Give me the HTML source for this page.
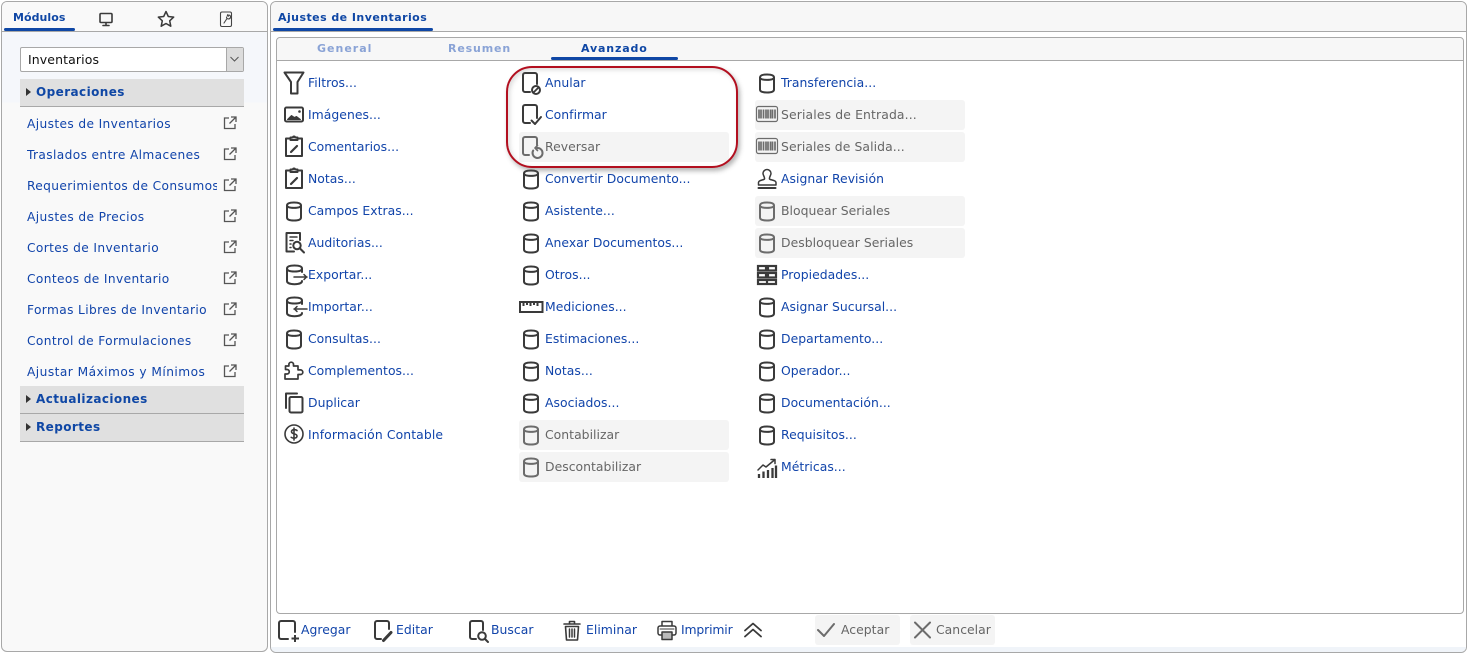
<!DOCTYPE html>
<html lang="es"><head><meta charset="utf-8"><title>Ajustes de Inventarios</title>
<style>
html,body{margin:0;padding:0;width:1469px;height:653px;overflow:hidden;background:#fff;font-family:"DejaVu Sans","Liberation Sans",sans-serif;}
*{box-sizing:border-box}
.a{position:absolute}
#L{left:1px;top:1px;width:267px;height:651px;border:1px solid #a8a8a8;border-radius:6px;background:linear-gradient(#f5f7fb 0,#f5f7fb 100px,#f9f9f9 101px);overflow:hidden}
#R{left:270px;top:1px;width:1197px;height:652px;border:1px solid #a8a8a8;border-radius:6px;background:#fff;overflow:hidden}
.tb{position:absolute;left:0;right:0;top:0;height:30px;background:#f7f7f7;border-bottom:1px solid #a8a8a8}
#body{left:276px;top:37px;width:1188px;height:577px;border:1px solid #a8a8a8;border-radius:4px;background:#fff}
#sub{position:absolute;left:0;right:0;top:0;height:23px;background:#f7f7f7;border-bottom:1px solid #a8a8a8;border-radius:4px 4px 0 0}
.ul{position:absolute;background:#0f47a5;height:3px;border-radius:2px}
.t{position:absolute;white-space:nowrap;font-size:12.4px;line-height:16px;color:#1144aa;margin-top:1px;letter-spacing:.03px}
.d{color:#666}
.b{position:absolute;font-weight:bold;white-space:nowrap;color:#0f47a5}
.g{position:absolute;width:210px;height:30px;background:#f4f4f4;border-radius:3px}
.ic{position:absolute;width:24px;height:24px;fill:none;stroke:#3a3a3a;stroke-width:2;stroke-linecap:round;stroke-linejoin:round;overflow:visible}
.dis{stroke:#6c6c6c}
.sec{position:absolute;left:20px;width:224px;height:28px;background:#e0e0e0;border-bottom:1px solid #a8a8a8}
.sec i{position:absolute;left:6px;top:9px;width:0;height:0;border-left:5px solid #333;border-top:4px solid transparent;border-bottom:4px solid transparent}
.sec span{position:absolute;left:16px;top:5px;font-size:12px;line-height:16px;font-weight:bold;letter-spacing:.42px;color:#0f47a5;white-space:nowrap}
.m{position:absolute;left:27px;margin-top:1px;font-size:12.2px;line-height:16px;color:#1144aa;white-space:nowrap;width:190px;overflow:hidden;letter-spacing:.38px}
.ext{position:absolute;left:222px;width:16px;height:16px;fill:none;stroke:#555;stroke-width:1.300}
</style></head><body>
<svg width="0" height="0" style="position:absolute">
<defs>
<symbol id="cyl" viewBox="0 0 24 24" overflow="visible"><path d="M5 7.500c0-2 2.800-3 7-3s7 1 7 3v12c0 2-2.800 3-7 3s-7-1-7-3z"/><path d="M5 7.500c0 1.600 2.800 2.400 7 2.400s7-.8 7-2.400"/></symbol>
<symbol id="ext" viewBox="0 0 16 16"><path d="M7 3H2.500v10.500H13V9"/><path d="M9 2h5v5M14 2L7.500 8.500"/></symbol>
</defs></svg>

<div id="L" class="a"><div class="tb" style="height:30px;background:#f9f9f9"></div></div>
<div id="R" class="a"><div class="tb"></div><div class="a" style="left:0;right:0;bottom:0;height:5px;background:#f0f4f9"></div></div>

<!-- left tabs -->
<div class="b" style="left:13px;top:11px;font-size:11px;line-height:14px;letter-spacing:.05px">Módulos</div>
<div class="ul" style="left:4px;top:28px;width:71px"></div>
<svg class="ic" style="left:94px;top:7px;stroke-width:1.600"><rect x="6" y="6.500" width="12" height="9" rx="1" fill="#f7f7f7"/><path d="M9 18.500h6M12 16v2"/></svg>
<svg class="ic" style="left:154px;top:7px;stroke-width:1.500"><path d="M12 4.500l2.300 5 5.400.6-4 3.700 1.100 5.400-4.800-2.700-4.800 2.700 1.100-5.400-4-3.700 5.400-.6z"/></svg>
<svg class="ic" style="left:214px;top:7px;stroke-width:1.100;stroke:#444"><rect x="6.500" y="5" width="11" height="14.500" rx="1.500"/><path d="M10 16l3-4.500M12.500 10a2 2 0 1 0 2.500-2l-.7 1.300-1-.5.500-1.200"/></svg>

<!-- select -->
<div class="a" style="left:20px;top:47px;width:224px;height:25px;background:#fff;border:1px solid #a8a8a8;border-radius:2px;font-size:12.5px;line-height:23px;padding-left:7px;color:#111;letter-spacing:.1px">Inventarios</div>
<div class="a" style="left:226px;top:48px;width:17px;height:23px;background:#dcdcdc;border-left:1px solid #a8a8a8"></div>
<svg class="a" style="left:229px;top:55px" width="11" height="8" fill="none" stroke="#555" stroke-width="1"><path d="M1.500 2l4 4 4-4"/></svg>

<!-- sections -->
<div class="sec" style="top:79px"><i></i><span>Operaciones</span></div>
<div class="m" style="top:115px">Ajustes de Inventarios</div>
<div class="m" style="top:146px">Traslados entre Almacenes</div>
<div class="m" style="top:177px">Requerimientos de Consumos</div>
<div class="m" style="top:208px">Ajustes de Precios</div>
<div class="m" style="top:239px">Cortes de Inventario</div>
<div class="m" style="top:270px">Conteos de Inventario</div>
<div class="m" style="top:301px">Formas Libres de Inventario</div>
<div class="m" style="top:332px">Control de Formulaciones</div>
<div class="m" style="top:363px;letter-spacing:.46px">Ajustar Máximos y Mínimos</div>
<svg class="ext" style="top:115px"><use href="#ext"/></svg>
<svg class="ext" style="top:146px"><use href="#ext"/></svg>
<svg class="ext" style="top:177px"><use href="#ext"/></svg>
<svg class="ext" style="top:208px"><use href="#ext"/></svg>
<svg class="ext" style="top:239px"><use href="#ext"/></svg>
<svg class="ext" style="top:270px"><use href="#ext"/></svg>
<svg class="ext" style="top:301px"><use href="#ext"/></svg>
<svg class="ext" style="top:332px"><use href="#ext"/></svg>
<svg class="ext" style="top:363px"><use href="#ext"/></svg>
<div class="sec" style="top:386px"><i></i><span>Actualizaciones</span></div>
<div class="sec" style="top:414px"><i></i><span>Reportes</span></div>

<!-- right tabs -->
<div class="b" style="left:278px;top:11px;font-size:11px;line-height:14px;letter-spacing:.45px">Ajustes de Inventarios</div>
<div class="ul" style="left:273px;top:28px;width:160px"></div>

<div id="body" class="a"><div id="sub"></div></div>
<div class="b" style="left:317px;top:42px;font-size:11px;line-height:14px;letter-spacing:1px;color:#8aa3d6">General</div>
<div class="b" style="left:448px;top:42px;font-size:11px;line-height:14px;letter-spacing:.85px;color:#8aa3d6">Resumen</div>
<div class="b" style="left:581px;top:42px;font-size:11px;line-height:14px;letter-spacing:.85px">Avanzado</div>
<div class="ul" style="left:551px;top:57px;width:127px"></div>

<!-- grey boxes -->
<div class="g" style="left:519px;top:132px"></div>
<div class="g" style="left:519px;top:420px"></div>
<div class="g" style="left:519px;top:452px"></div>
<div class="g" style="left:755px;top:100px"></div>
<div class="g" style="left:755px;top:132px"></div>
<div class="g" style="left:755px;top:196px"></div>
<div class="g" style="left:755px;top:228px"></div>

<!-- col 1 -->
<svg class="ic" style="left:282px;top:70px"><path d="M2.500 2.500h19L15.500 12v11.500H9V12z"/></svg>
<div class="t" style="left:308px;top:74px">Filtros...</div>
<svg class="ic" style="left:282px;top:102px"><rect x="3" y="5.500" width="18" height="14" rx="1.500"/><path d="M5.500 17.500l4-4 3 2 2-1 4 3z" fill="#3a3a3a" stroke-width="1"/><circle cx="17.500" cy="9.500" r="1.300" fill="#3a3a3a" stroke="none"/></svg>
<div class="t" style="left:308px;top:106px">Imágenes...</div>
<svg class="ic" style="left:282px;top:134px"><path d="M8 4.500H4V22h16V4.500h-4"/><path d="M8.500 6V3.500H11a1 1 0 0 1 2 0h2.500V6z"/><path d="M9 18l6-6" stroke-width="2.200"/></svg>
<div class="t" style="left:308px;top:138px">Comentarios...</div>
<svg class="ic" style="left:282px;top:166px"><path d="M8 4.500H4V22h16V4.500h-4"/><path d="M8.500 6V3.500H11a1 1 0 0 1 2 0h2.500V6z"/><path d="M9 18l6-6" stroke-width="2.200"/></svg>
<div class="t" style="left:308px;top:170px">Notas...</div>
<svg class="ic" style="left:282px;top:198px"><use href="#cyl"/></svg>
<div class="t" style="left:308px;top:202px">Campos Extras...</div>
<svg class="ic" style="left:282px;top:230px;stroke-width:2"><path d="M12 21.500H4.500V3h13.500v7"/><path d="M8 7h7M8 10.500h3M8 14h1M8 17.500h1" stroke-width="1.500"/><circle cx="15" cy="15.500" r="3.700"/><path d="M18 18.500l4 4"/></svg>
<div class="t" style="left:308px;top:234px">Auditorias...</div>
<svg class="ic" style="left:282px;top:262px"><path d="M20 10V6.500C20 4.500 17 3.500 12.500 3.500S5 4.500 5 6.500V19c0 2 3 3.200 7.500 3.200S20 21 20 19"/><path d="M5 6.500c0 2 3 3 7.500 3S20 8.500 20 6.500"/><path d="M12 15h13M22 12.500l2.500 2.500-2.500 2.500" stroke-width="1.500"/></svg>
<div class="t" style="left:308px;top:266px">Exportar...</div>
<svg class="ic" style="left:282px;top:294px"><path d="M20 10V6.500C20 4.500 17 3.500 12.500 3.500S5 4.500 5 6.500V19c0 2 3 3.200 7.500 3.200S20 21 20 19"/><path d="M5 6.500c0 2 3 3 7.500 3S20 8.500 20 6.500"/><path d="M12 15h13M15 12.500L12.500 15l2.500 2.500" stroke-width="1.500"/></svg>
<div class="t" style="left:308px;top:298px">Importar...</div>
<svg class="ic" style="left:282px;top:326px"><use href="#cyl"/></svg>
<div class="t" style="left:308px;top:330px">Consultas...</div>
<svg class="ic" style="left:282px;top:358px;stroke-width:1.700"><path d="M3 21h13v-4.500h2.500a2.300 2.300 0 0 0 0-4.600H16V8h-4.500V6.500a2.300 2.300 0 0 0-4.600 0V8H3.500v3.500h1.500a2 2 0 0 1 0 4.500H3z"/></svg>
<div class="t" style="left:308px;top:362px">Complementos...</div>
<svg class="ic" style="left:282px;top:390px"><path d="M4 18V3.500h11"/><rect x="7.500" y="7" width="13" height="15.500" rx="1.500"/></svg>
<div class="t" style="left:308px;top:394px">Duplicar</div>
<svg class="ic" style="left:282px;top:422px;stroke-width:1.600"><circle cx="12" cy="12" r="9"/><path d="M15 8.500c-1-1-5.500-1.500-5.500 1.300 0 2.700 5.500 1.500 5.500 4.200 0 2.800-4.500 2.400-5.800 1.300M12 6v12"/></svg>
<div class="t" style="left:308px;top:426px;letter-spacing:.1px">Información Contable</div>

<!-- col 2 -->
<svg class="ic" style="left:519px;top:71px"><path d="M11 21H6a2 2 0 0 1-2-2V4a2 2 0 0 1 2-2h10a2 2 0 0 1 2 2v9"/><circle cx="17" cy="19" r="4"/><path d="M14.500 21.500l5-5" stroke-width="1.800"/></svg>
<div class="t" style="left:545px;top:74px">Anular</div>
<svg class="ic" style="left:519px;top:103px"><path d="M11 20H6a2 2 0 0 1-2-2V4a2 2 0 0 1 2-2h10a2 2 0 0 1 2 2v11"/><path d="M12.500 17.500l3.500 3.500 6-7"/></svg>
<div class="t" style="left:545px;top:106px">Confirmar</div>
<svg class="ic dis" style="left:519px;top:135px"><path d="M10 20H6a2 2 0 0 1-2-2V4a2 2 0 0 1 2-2h10a2 2 0 0 1 2 2v6"/><path d="M14.200 15.500a5 5 0 1 0 3.800-2.500"/><path d="M18.500 10.500L16 13l2.500 2.500" stroke-width="1.600"/></svg>
<div class="t d" style="left:545px;top:138px">Reversar</div>
<svg class="ic" style="left:519px;top:166px"><use href="#cyl"/></svg>
<div class="t" style="left:545px;top:170px">Convertir Documento...</div>
<svg class="ic" style="left:519px;top:198px"><use href="#cyl"/></svg>
<div class="t" style="left:545px;top:202px">Asistente...</div>
<svg class="ic" style="left:519px;top:230px"><use href="#cyl"/></svg>
<div class="t" style="left:545px;top:234px">Anexar Documentos...</div>
<svg class="ic" style="left:519px;top:262px"><use href="#cyl"/></svg>
<div class="t" style="left:545px;top:266px">Otros...</div>
<svg class="ic" style="left:519px;top:294px;stroke-linecap:butt;stroke-linejoin:miter"><rect x="1" y="8" width="22.500" height="10"/><path d="M4.500 8v4M8 8v3M11.500 8v4M15 8v3M18.500 8v4" stroke-width="2"/></svg>
<div class="t" style="left:545px;top:298px">Mediciones...</div>
<svg class="ic" style="left:519px;top:326px"><use href="#cyl"/></svg>
<div class="t" style="left:545px;top:330px">Estimaciones...</div>
<svg class="ic" style="left:519px;top:358px"><use href="#cyl"/></svg>
<div class="t" style="left:545px;top:362px">Notas...</div>
<svg class="ic" style="left:519px;top:390px"><use href="#cyl"/></svg>
<div class="t" style="left:545px;top:394px">Asociados...</div>
<svg class="ic dis" style="left:519px;top:422px"><use href="#cyl"/></svg>
<div class="t d" style="left:545px;top:426px">Contabilizar</div>
<svg class="ic dis" style="left:519px;top:454px"><use href="#cyl"/></svg>
<div class="t d" style="left:545px;top:458px">Descontabilizar</div>

<!-- col 3 -->
<svg class="ic" style="left:755px;top:70px"><use href="#cyl"/></svg>
<div class="t" style="left:781px;top:74px">Transferencia...</div>
<svg class="ic dis" style="left:755px;top:102px;stroke-width:1.200"><rect x="1.500" y="4.500" width="21" height="15" rx="2"/><path d="M4 7.500v9M6 7.500v9M8.500 7.500v9M11 7.500v9M13 7.500v9M15.500 7.500v9M17.500 7.500v9M20 7.500v9" stroke-width="1.700" stroke-linecap="butt"/></svg>
<div class="t d" style="left:781px;top:106px;letter-spacing:.13px">Seriales de Entrada...</div>
<svg class="ic dis" style="left:755px;top:134px;stroke-width:1.200"><rect x="1.500" y="4.500" width="21" height="15" rx="2"/><path d="M4 7.500v9M6 7.500v9M8.500 7.500v9M11 7.500v9M13 7.500v9M15.500 7.500v9M17.500 7.500v9M20 7.500v9" stroke-width="1.700" stroke-linecap="butt"/></svg>
<div class="t d" style="left:781px;top:138px;letter-spacing:.08px">Seriales de Salida...</div>
<svg class="ic" style="left:755px;top:166px;stroke-width:1.500"><path d="M9.500 13c.5-2-1.500-3.500-1.500-5.500a4 4 0 0 1 8 0c0 2-2 3.500-1.500 5.500.3 1 6.500 1 6.500 3.500V19H3.500v-2.500c0-2.500 5.700-2.500 6-3.500z"/><path d="M3.500 22h17" stroke-width="2"/></svg>
<div class="t" style="left:781px;top:170px">Asignar Revisión</div>
<svg class="ic dis" style="left:755px;top:198px"><use href="#cyl"/></svg>
<div class="t d" style="left:781px;top:202px">Bloquear Seriales</div>
<svg class="ic dis" style="left:755px;top:230px"><use href="#cyl"/></svg>
<div class="t d" style="left:781px;top:234px">Desbloquear Seriales</div>
<svg class="ic" style="left:755px;top:262px;stroke-width:2.200;stroke-linecap:butt;stroke-linejoin:miter"><rect x="3" y="4" width="8" height="4.500"/><rect x="13" y="4" width="8" height="4.500"/><rect x="3" y="11" width="8" height="4.500"/><rect x="13" y="11" width="8" height="4.500"/><rect x="3" y="18" width="18" height="4"/><path d="M12 18v4"/></svg>
<div class="t" style="left:781px;top:266px">Propiedades...</div>
<svg class="ic" style="left:755px;top:294px"><use href="#cyl"/></svg>
<div class="t" style="left:781px;top:298px">Asignar Sucursal...</div>
<svg class="ic" style="left:755px;top:326px"><use href="#cyl"/></svg>
<div class="t" style="left:781px;top:330px">Departamento...</div>
<svg class="ic" style="left:755px;top:358px"><use href="#cyl"/></svg>
<div class="t" style="left:781px;top:362px">Operador...</div>
<svg class="ic" style="left:755px;top:390px"><use href="#cyl"/></svg>
<div class="t" style="left:781px;top:394px">Documentación...</div>
<svg class="ic" style="left:755px;top:422px"><use href="#cyl"/></svg>
<div class="t" style="left:781px;top:426px">Requisitos...</div>
<svg class="ic" style="left:755px;top:455px;stroke-width:1.500"><path d="M3 15l5-5 3 2 6-5M20 4.500h-4M20 4.500v4M20 4.500l-3 2.500"/><path d="M4 19v4M8.500 16.500V23M13 15v8M17.500 13v10M21 10.500V23" stroke-width="2.300" stroke-linecap="butt"/></svg>
<div class="t" style="left:781px;top:458px">Métricas...</div>

<!-- red highlight -->
<div class="a" style="left:506px;top:66px;width:232px;height:102px;border:2px solid #b20f1f;border-radius:26px;box-shadow:2px 3px 5px rgba(90,90,90,.45),inset 2px 2px 4px rgba(120,120,120,.25)"></div>

<!-- toolbar -->
<svg class="ic" style="left:276px;top:618px"><path d="M12 21H5a2 2 0 0 1-2-2V5a2 2 0 0 1 2-2h12a2 2 0 0 1 2 2v9"/><path d="M19 17v7M15.500 20.500H23" stroke-linecap="butt"/></svg>
<div class="t" style="left:301px;top:621px">Agregar</div>
<svg class="ic" style="left:371px;top:618px"><path d="M10 21H6a2 2 0 0 1-2-2V5a2 2 0 0 1 2-2h10a2 2 0 0 1 2 2v6"/><path d="M12.500 22.500l7.500-8" stroke-width="3"/></svg>
<div class="t" style="left:396px;top:621px">Editar</div>
<svg class="ic" style="left:466px;top:618px"><path d="M10 21H6a2 2 0 0 1-2-2V5a2 2 0 0 1 2-2h9a2 2 0 0 1 2 2v7"/><circle cx="16" cy="18" r="3.800"/><path d="M19 21l3 3"/></svg>
<div class="t" style="left:491px;top:621px">Buscar</div>
<svg class="ic" style="left:560px;top:618px;stroke-width:1.600"><path d="M4 6h16M9.500 6V3.500h5V6M5.500 8.500h13L17.500 22h-11z"/><path d="M9.500 11v8M12 11v8M14.500 11v8" stroke-width="1.500"/></svg>
<div class="t" style="left:586px;top:621px">Eliminar</div>
<svg class="ic" style="left:655px;top:618px;stroke-width:1.500"><path d="M7 8V3.500h10V8M7 17H5a2 2 0 0 1-2-2v-5a2 2 0 0 1 2-2h14a2 2 0 0 1 2 2v5a2 2 0 0 1-2 2h-2"/><rect x="7" y="14" width="10" height="7.500" fill="#bbb"/><path d="M5 11h14" stroke-width="1"/></svg>
<div class="t" style="left:681px;top:621px;letter-spacing:-.15px">Imprimir</div>
<svg class="ic" style="left:741px;top:618px;stroke-width:1.800"><path d="M4 12.500l8-7 8 7M4 18.500l8-7 8 7"/></svg>
<div class="a" style="left:815px;top:615px;width:85px;height:30px;background:#f4f4f4;border-radius:3px"></div>
<svg class="ic dis" style="left:814px;top:618px"><path d="M4 12l6 6L20 6"/></svg>
<div class="t d" style="left:841px;top:621px">Aceptar</div>
<div class="a" style="left:910px;top:615px;width:85px;height:30px;background:#f4f4f4;border-radius:3px"></div>
<svg class="ic dis" style="left:910px;top:618px"><path d="M5 4.500l15 15M20 4.500l-15 15"/></svg>
<div class="t d" style="left:936px;top:621px">Cancelar</div>
</body></html>
